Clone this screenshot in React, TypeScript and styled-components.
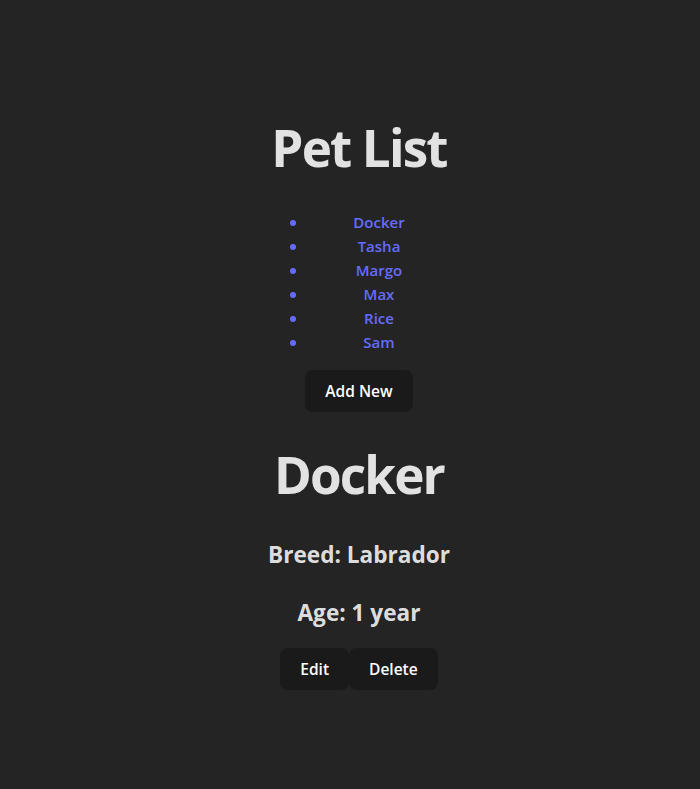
import React from "react";
import styled, { createGlobalStyle } from "styled-components";

const Global = createGlobalStyle`
  html, body { margin: 0; padding: 0; }
  body {
    background: #242424;
    color: rgba(255, 255, 255, 0.87);
    font-family: "Open Sans", "Noto Sans", sans-serif;
    line-height: 1.5;
    font-weight: 400;
    min-height: 100vh;
    display: flex;
    align-items: center;
    justify-content: center;
    padding-left: 18px;
    box-sizing: border-box;
  }
`;

const Root = styled.div`
  width: 182px;
  padding: 24px 0 38px;
  text-align: center;
`;

const Title = styled.h1`
  font-size: 51.2px;
  line-height: 1.1;
  font-weight: 700;
  margin: 34px 0;
  letter-spacing: -1.85px;
  white-space: nowrap;
`;

const List = styled.ul`
  margin: 16px 0;
  padding-left: 40px;
  color: #646cff;
`;

const Item = styled.li`
  line-height: 24px;
  &::marker { color: #646cff; }
`;

const PetLink = styled.a`
  color: #646cff;
  font-weight: 600;
  font-size: 15px;
  text-decoration: none;
  cursor: pointer;
`;

const Button = styled.button`
  border-radius: 8px;
  border: 1px solid transparent;
  padding: 8px 19px;
  font-size: 15.5px;
  font-weight: 600;
  font-family: inherit;
  background-color: #1a1a1a;
  color: #fff;
  line-height: 24px;
  cursor: pointer;
`;

const Detail = styled.h2`
  font-size: 22.6px;
  font-weight: 700;
  margin: 20px 0 16px;
  line-height: 38px;
  white-space: nowrap;
`;

const ButtonRow = styled.div`
  display: flex;
  justify-content: center;
`;

const pets = ["Docker", "Tasha", "Margo", "Max", "Rice", "Sam"];

export default function App() {
  return (
    <>
      <Global />
      <Root>
        <Title>Pet List</Title>
        <List>
          {pets.map((p) => (
            <Item key={p}>
              <PetLink>{p}</PetLink>
            </Item>
          ))}
        </List>
        <Button>Add New</Button>
        <Title>Docker</Title>
        <Detail>Breed: Labrador</Detail>
        <Detail>Age: 1 year</Detail>
        <ButtonRow>
          <Button>Edit</Button>
          <Button>Delete</Button>
        </ButtonRow>
      </Root>
    </>
  );
}
